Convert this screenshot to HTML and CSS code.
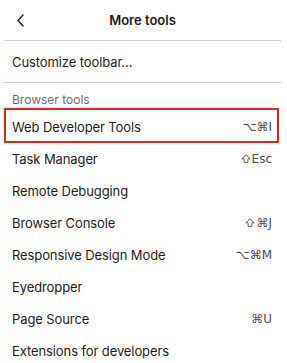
FILE: index.html
```html
<!DOCTYPE html>
<html lang="en">
<head>
  <meta charset="UTF-8">
  <title>More tools</title>
  <meta name="viewport" content="width=device-width, initial-scale=1.0">
  <link rel="stylesheet" href="styles.css">
</head>
<body>

  <div class="panel">
    <header class="panel-header">
      <button class="back-btn" aria-label="Back">
        <svg width="9" height="13" viewBox="0 0 9 13">
          <path d="M7 1 L2 6.5 L7 12" fill="none" stroke="#1c1c1c" stroke-width="1.4" stroke-linecap="round" stroke-linejoin="round"/>
        </svg>
      </button>
      <div class="panel-title">More tools</div>
    </header>

    <div class="sep"></div>

    <div class="item item-tall">
      <span class="label">Customize toolbar…</span>
    </div>

    <div class="sep"></div>

    <div class="group-title">Browser tools</div>

    <ul class="menu">
      <li class="item highlight">
        <span class="label">Web Developer Tools</span>
        <span class="key">⌥⌘I</span>
      </li>
      <li class="item">
        <span class="label">Task Manager</span>
        <span class="key"><svg class="shift" width="10" height="9" viewBox="0 0 10 9"><path d="M5 0.8 L9.2 4.8 L6.9 4.8 L6.9 8.3 L3.1 8.3 L3.1 4.8 L0.8 4.8 Z" fill="none" stroke="#4a4a4a" stroke-width="0.9" stroke-linejoin="round"/></svg>Esc</span>
      </li>
      <li class="item">
        <span class="label">Remote Debugging</span>
      </li>
      <li class="item">
        <span class="label">Browser Console</span>
        <span class="key"><svg class="shift" width="10" height="9" viewBox="0 0 10 9"><path d="M5 0.8 L9.2 4.8 L6.9 4.8 L6.9 8.3 L3.1 8.3 L3.1 4.8 L0.8 4.8 Z" fill="none" stroke="#4a4a4a" stroke-width="0.9" stroke-linejoin="round"/></svg>⌘J</span>
      </li>
      <li class="item">
        <span class="label">Responsive Design Mode</span>
        <span class="key">⌥⌘M</span>
      </li>
      <li class="item">
        <span class="label">Eyedropper</span>
      </li>
      <li class="item">
        <span class="label">Page Source</span>
        <span class="key">⌘U</span>
      </li>
      <li class="item">
        <span class="label">Extensions for developers</span>
      </li>
    </ul>
  </div>

</body>
</html>
```

FILE: styles.css
```css
body {
  margin: 0;
  font-family: 'Inter', 'Noto Sans', sans-serif;
  background-color: #ffffff;
  color: #1b1b1b;
  font-size: 13px;
}

.panel {
  padding: 0 6px 0 4px;
}

.panel-header {
  height: 40px;
  display: flex;
  align-items: center;
  justify-content: center;
  position: relative;
}

.back-btn {
  position: absolute;
  left: 9px;
  top: 13px;
  width: 14px;
  height: 14px;
  padding: 0;
  border: none;
  background: none;
  display: flex;
  align-items: center;
  justify-content: center;
}

.panel-title {
  font-weight: 600;
  font-size: 13px;
  margin-top: -1px;
}

.sep {
  height: 1px;
  background-color: #cfcfcf;
}

.item {
  display: flex;
  align-items: center;
  justify-content: space-between;
  height: 32px;
  padding: 0 9px 0 8px;
}

.label {
  letter-spacing: -0.1px;
}

.item-tall {
  height: 41px;
}

.group-title {
  color: #6d6d6d;
  font-size: 12px;
  padding: 9px 8px 0 8px;
  height: 19px;
}

.menu {
  list-style: none;
  margin: 0;
  padding: 0;
}

.key {
  display: flex;
  align-items: center;
  gap: 1px;
  color: #4a4a4a;
  font-family: 'DejaVu Sans', sans-serif;
  font-size: 12px;
}

.shift {
  margin-top: -1px;
}

.highlight {
  position: relative;
}

/* red annotation frame */
.highlight::after {
  content: "";
  position: absolute;
  top: -3px;
  bottom: 0;
  left: 0;
  right: 2px;
  border: 2px solid #e8231c;
}
```
